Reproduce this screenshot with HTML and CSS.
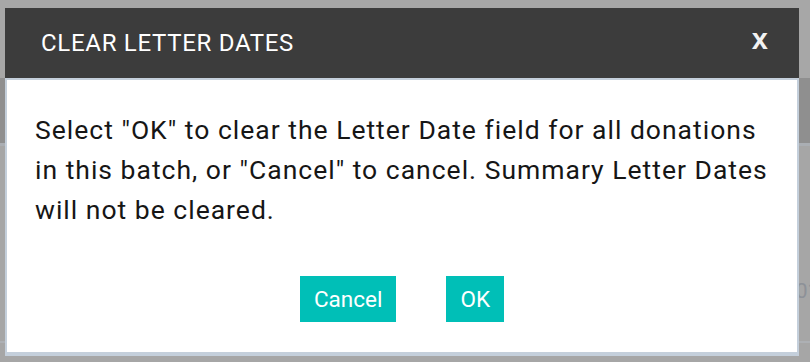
FILE: index.html
```html
<!DOCTYPE html>
<html lang="en">
<head>
<meta charset="utf-8">
<title>Clear Letter Dates</title>
<link rel="stylesheet" href="styles.css">
</head>
<body>
<div class="page">
  <div class="page-top"></div>
  <div class="page-bar"></div>
  <div class="page-rows">
    <div class="page-row page-row-a"></div>
    <div class="page-row page-row-b"><span class="page-val">2017</span></div>
  </div>
</div>

<div class="dialog">
  <div class="dialog-head">
    <span class="dialog-title">CLEAR LETTER DATES</span>
    <span class="dialog-close">x</span>
  </div>
  <div class="dialog-body">
    <p class="dialog-text">Select "OK" to clear the Letter Date field for all donations in this batch, or "Cancel" to cancel. Summary Letter Dates will not be cleared.</p>
    <div class="dialog-actions">
      <button class="btn">Cancel</button>
      <button class="btn">OK</button>
    </div>
  </div>
</div>
</body>
</html>
```

FILE: styles.css
```css
html, body {
  margin: 0;
  padding: 0;
}
body {
  width: 810px;
  height: 362px;
  overflow: hidden;
  background: #a6a6a6;
  font-family: Roboto, "Liberation Sans", sans-serif;
  position: relative;
}

.page {
  display: flex;
  flex-direction: column;
  height: 362px;
}
.page-top {
  height: 78px;
  background: #a7a7a7;
}
.page-bar {
  height: 65px;
  background: #8f8f8f;
  border-bottom: 3px solid #aaaeb3;
}
.page-rows {
  flex: 1;
  display: flex;
  flex-direction: column;
}
.page-row-a {
  height: 118px;
}
.page-row-b {
  height: 77px;
  border-bottom: 2px solid #adb0b4;
  display: flex;
  align-items: center;
  padding-left: 784px;
  white-space: nowrap;
}
.page-val {
  font-size: 21px;
  color: #8d9198;
  margin-top: -24px;
}

.dialog {
  position: absolute;
  left: 5px;
  top: 8px;
  width: 794px;
  display: flex;
  flex-direction: column;
}
.dialog-head {
  height: 70px;
  background: #3c3c3c;
  display: flex;
  align-items: center;
  justify-content: space-between;
  padding: 0 31px 0 36px;
}
.dialog-title {
  color: #ffffff;
  font-size: 24px;
  letter-spacing: 0.7px;
}
.dialog-close {
  color: #f2f2f2;
  font-family: "Liberation Sans", Arial, sans-serif;
  font-weight: bold;
  font-size: 29px;
  margin-top: -8px;
}
.dialog-body {
  background: #ffffff;
  border: 2px solid #c4cfdb;
  border-bottom-width: 4px;
  padding: 30px 20px 30px 28px;
  display: flex;
  flex-direction: column;
}
.dialog-text {
  margin: 0;
  font-size: 26.5px;
  line-height: 40px;
  letter-spacing: 1px;
  color: #161616;
}
.dialog-actions {
  margin: 46px 8px 0 0;
  display: flex;
  justify-content: center;
  gap: 50px;
}
.btn {
  height: 46px;
  padding: 0 14px;
  border: none;
  border-radius: 0;
  background: #00bfb7;
  color: #ffffff;
  font-family: Roboto, "Liberation Sans", sans-serif;
  font-size: 22.5px;
  cursor: pointer;
}
```
